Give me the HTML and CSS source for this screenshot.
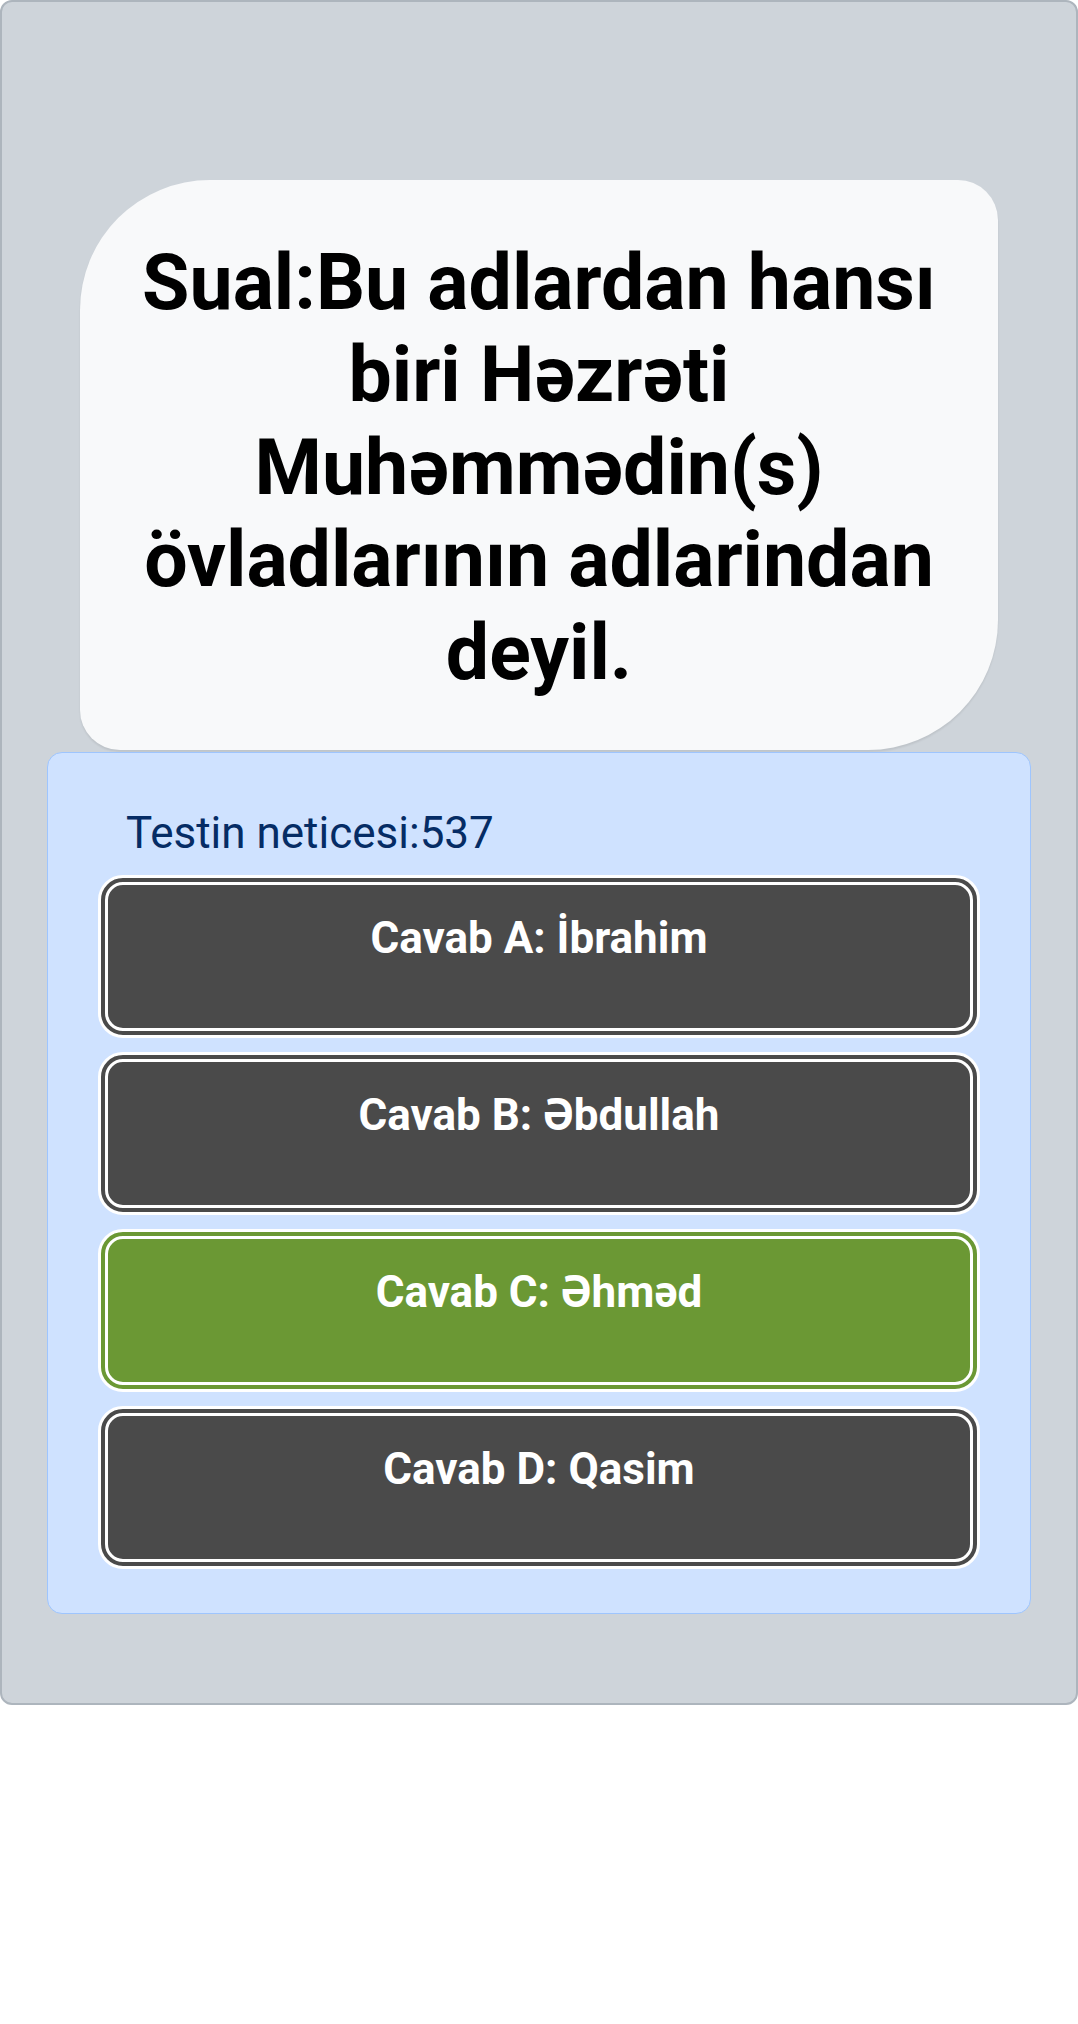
FILE: index.html
```html
<!doctype html>
<html>

<head>
    <meta charset="utf-8">
    <title>Sual - Test</title>
    <link rel="stylesheet" href="styles.css">
</head>

<body>
<!--Main quiz card-->
<div class="quiz">
    <!--Question text-->
    <div class="question">
        <h1>Sual:Bu adlardan hansı biri Həzrəti Muhəmmədin(s) övladlarının adlarindan deyil.</h1>
    </div>

    <!--Score and answer buttons-->
    <div class="answers">
        <p class="score">Testin neticesi:537</p>
        <button class="answer">Cavab A: İbrahim</button>
        <button class="answer">Cavab B: Əbdullah</button>
        <button class="answer correct">Cavab C: Əhməd</button>
        <button class="answer">Cavab D: Qasim</button>
    </div>
</div>
</body>

</html>
```

FILE: styles.css
```css
body{margin:0; font-family:Roboto, "Liberation Sans", sans-serif; background-color:white;}
/*Grey outer card*/
.quiz{background-color:#ced4da; border:2px solid #adb5bd; border-radius:12px; padding:178px 45px 89px;}
/*Question bubble*/
.question{background-color:#f8f9fa; margin:0 33px 2px; padding:57px 40px 51px; border-radius:130px 40px; box-shadow:0 2px 2px rgba(0,0,0,0.08);}
.question h1{margin:0; font-size:77px; line-height:1.2; font-weight:700; text-align:center; color:black;}
/*Blue answers panel*/
.answers{background-color:#cfe2ff; border:1px solid #9ec5fe; border-radius:15px; padding:47px 50px 44px;}
.score{margin:0 0 9px; padding-left:28px; font-size:44px; line-height:1.5; color:#052c65;}
/*Answer buttons - text sits near the top, not centred*/
.answer{display:block; width:100%; margin:0 0 14px; padding:20px 0 57px; box-sizing:border-box; border:10px double white; border-radius:25px; background-color:#4a4a4a; color:white; font-family:Roboto, "Liberation Sans", sans-serif; font-size:44px; line-height:1.5; font-weight:700; text-align:center; cursor:pointer;}
.answer:last-child{margin-bottom:0;}
.answer.correct{background-color:#6b9834;}
```
